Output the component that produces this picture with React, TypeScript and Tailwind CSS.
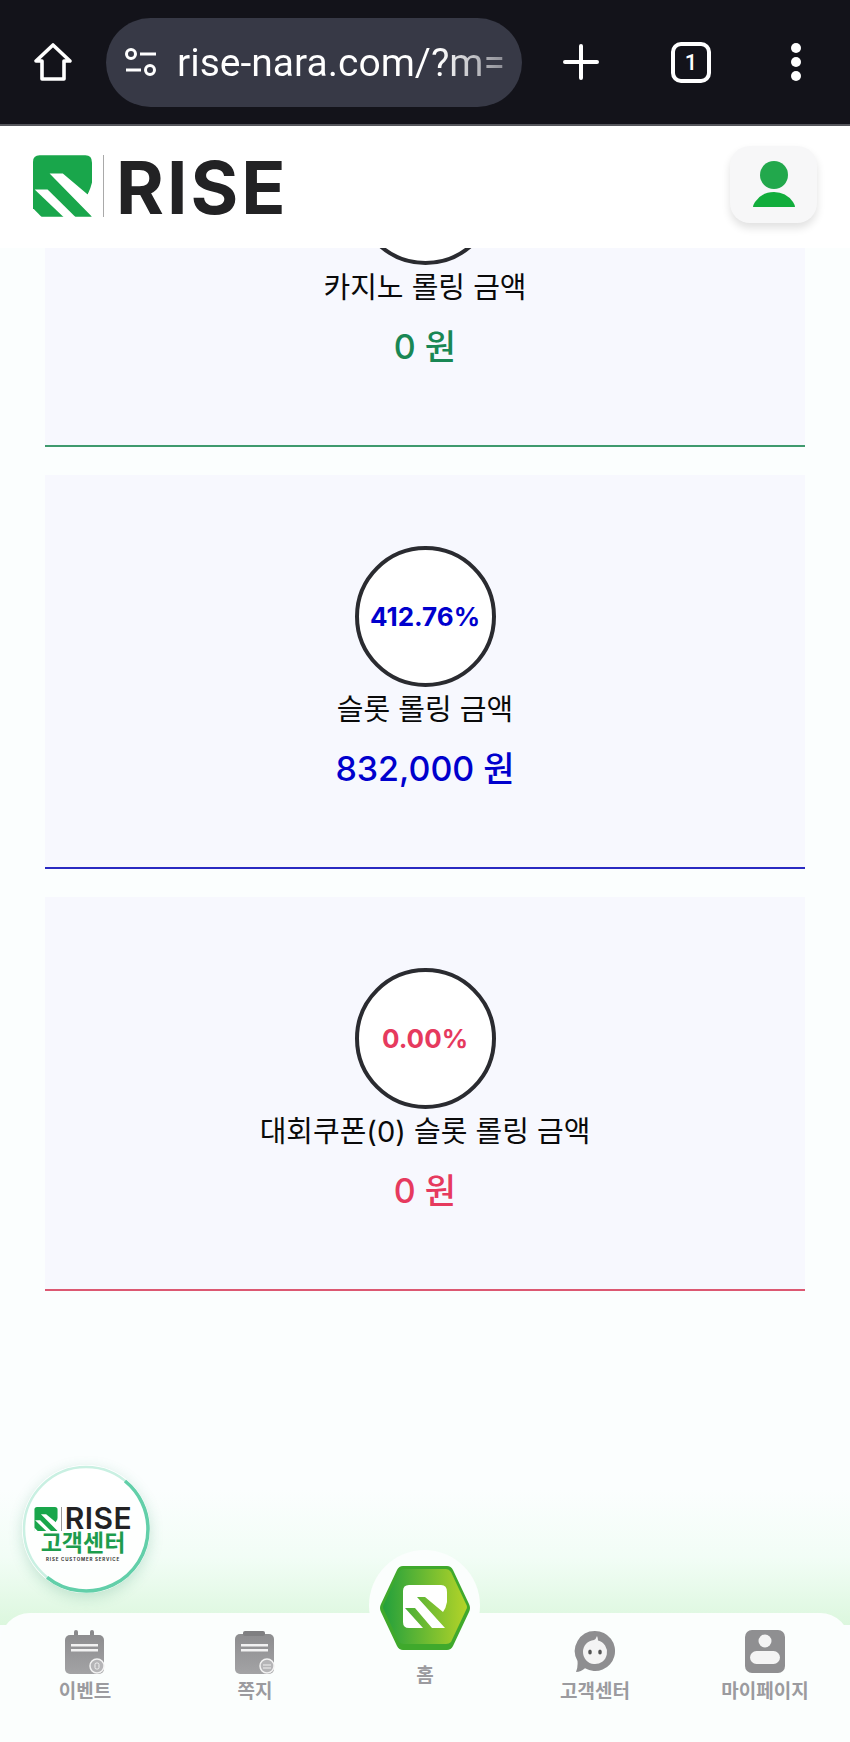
import { useId } from "react"

const sans = "font-['Inter','Noto_Sans_CJK_KR',sans-serif]"

type RollingCard = {
  percent: string
  label: string
  amount: string
  color: string
  line: string
}

const cards: RollingCard[] = [
  { percent: "0.00%", label: "카지노 롤링 금액", amount: "0 원", color: "text-[#198754]", line: "border-[#3f9a6e]" },
  { percent: "412.76%", label: "슬롯 롤링 금액", amount: "832,000 원", color: "text-[#0000cd]", line: "border-[#2a2ac2]" },
  { percent: "0.00%", label: "대회쿠폰(0) 슬롯 롤링 금액", amount: "0 원", color: "text-[#e63a5e]", line: "border-[#dc5872]" },
]

function LogoMark({ className }: { className?: string }) {
  return (
    <svg viewBox="40 30 178 185" className={className}>
      <path d="M60 30H198Q218 30 218 52V215H40V50Q40 30 60 30Z" fill="#19a64b" />
      <path d="M90 85H130L205 148Q214 130 218 112V215L218 215Z" fill="#fff" />
      <path d="M205 148L225 120V220H218Z" fill="#fff" />
      <path d="M45 133H84L168 216H132Z" fill="#fff" />
      <path d="M38 188L66 216H38Z" fill="#fff" />
    </svg>
  )
}

function BrowserBar() {
  return (
    <div className="h-[126px] shrink-0 bg-[#13131a] border-b-2 border-[#55565c] flex items-center">
      <svg viewBox="0 0 40 40" className="ml-[33px] w-10 h-10 text-white" fill="none" stroke="currentColor" strokeWidth="3.6" strokeLinejoin="round">
        <path d="M20 3L37 19H31V37H9V19H3Z" />
      </svg>
      <div className="ml-[33px] w-[416px] h-[89px] rounded-full bg-[#373946] flex items-center">
        <svg viewBox="0 0 34 30" className="ml-[18px] w-[34px] h-[30px] text-white" fill="none" stroke="currentColor" strokeWidth="3">
          <circle cx="7" cy="7" r="4.5" />
          <path d="M16 7H32M2 23H17" />
          <circle cx="26" cy="23" r="4.5" />
        </svg>
        <span className="ml-[19px] mt-[3px] w-[327px] overflow-hidden whitespace-nowrap font-['Roboto',sans-serif] text-[39px] bg-linear-to-r from-white via-white via-80% to-[#8d8e96] bg-clip-text text-transparent">
          rise-nara.com/?m=
        </span>
      </div>
      <svg viewBox="0 0 36 36" className="ml-[41px] w-9 h-9 text-white" fill="none" stroke="currentColor" strokeWidth="4" strokeLinecap="round">
        <path d="M18 2V34M2 18H34" />
      </svg>
      <div className="ml-[72px] w-10 h-[41px] rounded-[10px] border-[4px] border-white flex items-center justify-center font-['Roboto',sans-serif] text-white text-[22px] font-medium">
        1
      </div>
      <div className="ml-[80px] flex flex-col gap-[4px]">
        <div className="w-[10px] h-[10px] rounded-full bg-white" />
        <div className="w-[10px] h-[10px] rounded-full bg-white" />
        <div className="w-[10px] h-[10px] rounded-full bg-white" />
      </div>
    </div>
  )
}

function SiteHeader() {
  return (
    <header className="relative z-10 h-[122px] shrink-0 bg-white flex items-center pl-[33px] pr-[33px]">
      <LogoMark className="w-[59px] h-[62px] -mt-[2px]" />
      <div className="ml-[11px] w-px h-[62px] -mt-[2px] bg-[#a9a9a9]" />
      <span className="ml-[12px] mt-[1px] font-['Inter',sans-serif] font-bold text-[73px] leading-none tracking-[3px] text-[#222224]">RISE</span>
      <div className="ml-auto -mt-[6px] w-[87px] h-[77px] rounded-[20px] bg-[#f7f7f8] shadow-[0_5px_8px_rgba(0,0,0,0.12)] flex items-center justify-center">
        <svg viewBox="0 0 44 46" className="w-[44px] h-[46px]">
          <circle cx="22" cy="14" r="14" fill="#22a84c" />
          <path d="M1 46Q1 44 3 41Q10 31 22 31Q34 31 41 41Q43 44 43 46Z" fill="#12ad3c" />
        </svg>
      </div>
    </header>
  )
}

function Card({ card, first }: { card: RollingCard; first?: boolean }) {
  return (
    <section className={`h-[394px] mb-[28px] flex flex-col items-center pt-[71px] bg-[#f7f8fe] border-b-2 ${card.line} ${first ? "-mt-[195px]" : ""}`}>
      <div className="w-[141px] h-[141px] shrink-0 rounded-full bg-white border-[4px] border-[#2a2b30] flex items-center justify-center">
        <span className={`${card.color} text-[26px] font-bold`}>{card.percent}</span>
      </div>
      <div className="h-[46px] flex items-center text-[29px] text-[#0a0a0a] whitespace-nowrap">{card.label}</div>
      <div className={`h-[70px] flex items-center text-[34px] font-medium whitespace-nowrap ${card.color}`}>{card.amount}</div>
    </section>
  )
}

function GrayDefs({ id }: { id: string }) {
  return (
    <defs>
      <linearGradient id={id} x1="0" y1="0" x2="0" y2="1">
        <stop offset="0" stopColor="#8d8d8f" />
        <stop offset="1" stopColor="#a3a3a5" />
      </linearGradient>
    </defs>
  )
}

function CalendarIcon() {
  const id = useId()
  return (
    <svg viewBox="0 0 42 44" className="w-[42px] h-[44px]">
      <GrayDefs id={id} />
      <rect x="10" y="0" width="4" height="10" rx="2" fill="#8a8a8c" />
      <rect x="26" y="0" width="4" height="10" rx="2" fill="#8a8a8c" />
      <rect x="1" y="5" width="39" height="39" rx="5" fill={`url(#${id})`} />
      <rect x="7" y="14" width="27" height="2.5" fill="#f2f2f2" />
      <rect x="7" y="19" width="27" height="2.5" fill="#f2f2f2" />
      <circle cx="33" cy="36" r="7" fill="#b5b5b7" stroke="#f2f2f2" strokeWidth="1.5" />
      <rect x="31" y="33" width="4" height="6" rx="1.5" fill="none" stroke="#f2f2f2" strokeWidth="1" />
    </svg>
  )
}

function NoteIcon() {
  const id = useId()
  return (
    <svg viewBox="0 0 42 44" className="w-[42px] h-[44px]">
      <GrayDefs id={id} />
      <rect x="1" y="4" width="39" height="40" rx="5" fill={`url(#${id})`} />
      <rect x="9" y="1" width="22" height="5" rx="2" fill="#7f7f81" />
      <rect x="7" y="14" width="27" height="2.5" fill="#f2f2f2" />
      <rect x="7" y="19" width="27" height="2.5" fill="#f2f2f2" />
      <circle cx="33" cy="36" r="7" fill="#b5b5b7" stroke="#f2f2f2" strokeWidth="1.5" />
      <path d="M29 35H37M29 38H37" stroke="#f2f2f2" strokeWidth="1.2" />
    </svg>
  )
}

function ChatIcon() {
  return (
    <svg viewBox="0 0 42 44" className="w-[42px] h-[44px]">
      <path d="M21 1A20 20 0 1 1 11 38.300Q7 42 2 42Q4 38 3.500 31A20 20 0 0 1 21 1Z" fill="#8e8e90" />
      <path d="M9 22A12 12 0 0 1 20 10Q22 9 23 6Q24 8 24 10.500A12 12 0 1 1 9 22Z" fill="#f4f4f4" />
      <ellipse cx="16" cy="22" rx="1.800" ry="2.600" fill="#555" />
      <ellipse cx="26" cy="22" rx="1.800" ry="2.600" fill="#555" />
    </svg>
  )
}

function PersonIcon() {
  return (
    <svg viewBox="0 0 42 44" className="w-[42px] h-[44px]">
      <rect x="1" y="0" width="40" height="43" rx="7" fill="#8f8f91" />
      <circle cx="21" cy="11" r="6.500" fill="#f4f4f4" />
      <rect x="6" y="21" width="30" height="13" rx="6.500" fill="#f4f4f4" />
    </svg>
  )
}

function HomeHex() {
  return (
    <svg viewBox="0 0 92 88" className="w-[92px] h-[88px]">
      <defs>
        <linearGradient id="hexFill" x1="0" y1="0" x2="1" y2="0">
          <stop offset="0" stopColor="#23a03c" />
          <stop offset="1" stopColor="#b4d428" />
        </linearGradient>
      </defs>
      <path d="M24 2H68Q72 2 74 6L90 40Q92 44 90 48L74 82Q72 86 68 86H24Q20 86 18 82L2 48Q0 44 2 40L18 6Q20 2 24 2Z" fill="#3fa92c" />
      <path d="M25 5H67Q70 5 72 8L87 40Q89 43 87 46L72 78Q70 80 67 80H25Q22 80 20 78L5 46Q3 43 5 40L20 8Q22 5 25 5Z" fill="url(#hexFill)" />
      <path d="M30 21H62Q68 21 68 28V38Q67 44 64 48L46 33H38L66 64H53L36 44H26L44 64H30Q24 64 24 58V27Q24 21 30 21Z" fill="#fff" />
    </svg>
  )
}

function FloatingSupport() {
  return (
    <div className={`absolute left-[22px] top-[1465px] w-[128px] h-[128px] rounded-full bg-white/90 shadow-[0_4px_14px_rgba(40,140,100,0.22)] ${sans}`}>
      <svg viewBox="0 0 128 128" className="absolute inset-0 w-full h-full" fill="none">
        <circle cx="64" cy="64" r="62" stroke="#c9f0e2" strokeWidth="2.500" />
        <path d="M103 16A62 62 0 0 1 126 64A62 62 0 0 1 25.100 112.300" stroke="#62cfa9" strokeWidth="3.500" />
      </svg>
      <div className="relative flex flex-col items-center pt-[41px] pr-[6px]">
        <div className="flex items-center h-[25px]">
          <LogoMark className="w-[24px] h-[24px]" />
          <div className="ml-[3px] w-px h-6 bg-[#999]" />
          <span className="ml-[3px] font-['Inter',sans-serif] font-semibold text-[30px] leading-[25px] tracking-[0.5px] text-[#222224]">RISE</span>
        </div>
        <div className="text-[23px] leading-[24px] font-bold text-[#1d9c4d] whitespace-nowrap">고객센터</div>
        <div className="mt-[2px] text-[4.500px] font-bold tracking-[0.8px] leading-[6px] text-[#333] whitespace-nowrap">RISE CUSTOMER SERVICE</div>
      </div>
    </div>
  )
}

const navItems = [
  { label: "이벤트", icon: <CalendarIcon /> },
  { label: "쪽지", icon: <NoteIcon /> },
  { label: "홈", icon: null },
  { label: "고객센터", icon: <ChatIcon /> },
  { label: "마이페이지", icon: <PersonIcon /> },
]

function BottomNav() {
  return (
    <>
      <div className="absolute left-0 right-0 top-[1490px] h-[135px] bg-linear-to-b from-transparent via-[#f2fdf6] via-50% to-[#dcf7de]" />
      <div className="absolute left-[369px] top-[1550px] w-[111px] h-[111px] rounded-full bg-[#fbfefd]" />
      <nav className={`absolute left-0 right-0 bottom-0 h-[129px] rounded-t-[30px] bg-[#fbfefd] grid grid-cols-5 ${sans}`}>
        {navItems.map((item) => (
          <div key={item.label} className="flex flex-col items-center">
            {item.icon ? (
              <div className="mt-[17px] h-[44px]">{item.icon}</div>
            ) : (
              <div className="h-[45px]" />
            )}
            <span className="mt-[6px] text-[19px] leading-6 font-bold text-[#9b9b9f] whitespace-nowrap">{item.label}</span>
          </div>
        ))}
      </nav>
      <div className="absolute left-[379px] top-[1564px]">
        <HomeHex />
      </div>
    </>
  )
}

export default function App() {
  return (
    <div className={`relative w-[850px] h-[1742px] overflow-hidden flex flex-col bg-[#fbfefe] ${sans}`}>
      <BrowserBar />
      <SiteHeader />
      <main className="flex-1 overflow-hidden px-[45px]">
        {cards.map((card, i) => (
          <Card key={card.label} card={card} first={i === 0} />
        ))}
      </main>
      <BottomNav />
      <FloatingSupport />
    </div>
  )
}
